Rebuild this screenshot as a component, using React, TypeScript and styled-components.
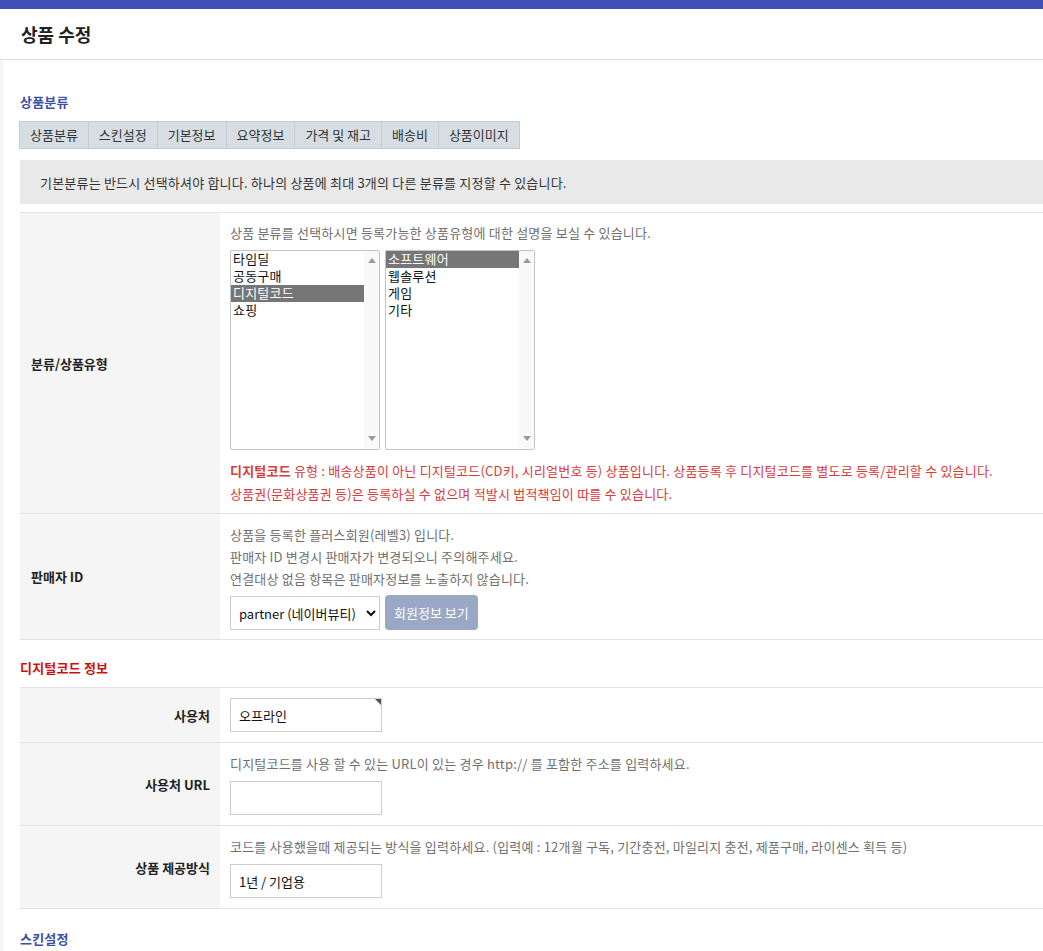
import styled, { createGlobalStyle } from "styled-components";

const GlobalStyle = createGlobalStyle`
  html, body {
    margin: 0;
    padding: 0;
    background: #ffffff;
  }
  body {
    font-family: "Noto Sans CJK KR", "Noto Sans", sans-serif;
    font-size: 13px;
    color: #333;
    letter-spacing: 0.2px;
  }
  * { box-sizing: border-box; }
`;

const TopBar = styled.div`
  height: 9px;
  background: #3f51b5;
`;

const Header = styled.header`
  height: 51px;
  display: flex;
  align-items: center;
  padding-left: 21px;
  border-bottom: 1px solid #dddddd;
  h1 {
    margin: 0;
    font-size: 18px;
    font-weight: 700;
    color: #222;
    letter-spacing: 0;
  }
`;

const Content = styled.main`
  padding-left: 20px;
  border-left: 3px solid #f5f5f5;
`;

const SectionTitle = styled.h2<{ $tone?: "blue" | "red"; $top: number }>`
  margin: 0 0 0 -3px;
  font-size: 13px;
  font-weight: 700;
  line-height: 18px;
  color: ${(p) => (p.$tone === "red" ? "#cc1111" : "#3d4fa8")};
  padding-top: ${(p) => p.$top}px;
  padding-bottom: 10px;
`;

const Tabs = styled.ul`
  display: inline-flex;
  margin: 0 0 0 -4px;
  padding: 0;
  list-style: none;
  border: 1px solid #c5cdd2;
  background: #d6dee3;
`;

const Tab = styled.li`
  height: 26px;
  line-height: 26px;
  padding: 0 10px;
  color: #333;
  letter-spacing: 0;
  border-left: 1px solid #c5cdd2;
  &:first-child { border-left: none; }
`;

const Notice = styled.div`
  margin: 11px 0 0 -3px;
  height: 44px;
  display: flex;
  align-items: center;
  padding-left: 20px;
  background: #e9e9e9;
  color: #333;
`;

const Table = styled.div<{ $gap: number }>`
  margin: ${(p) => p.$gap}px 0 0 -3px;
  border-top: 1px solid #e2e2e2;
`;

const Row = styled.div`
  display: grid;
  grid-template-columns: 200px 1fr;
  border-bottom: 1px solid #e2e2e2;
`;

const Label = styled.div<{ $align?: "left" | "right" }>`
  background: #f5f5f5;
  display: flex;
  align-items: center;
  justify-content: ${(p) => (p.$align === "right" ? "flex-end" : "flex-start")};
  padding: 0 10px 0 11px;
  font-weight: 700;
  color: #222;
  letter-spacing: 0;
`;

const Cell = styled.div<{ $pt?: number; $pb?: number }>`
  padding: ${(p) => p.$pt ?? 10}px 10px ${(p) => p.$pb ?? 10}px 10px;
  display: flex;
  flex-direction: column;
  align-items: flex-start;
`;

const Help = styled.p<{ $lh?: number }>`
  margin: 0;
  color: #707070;
  line-height: ${(p) => p.$lh ?? 20}px;
`;

const ListRow = styled.div`
  display: flex;
  gap: 5px;
  margin-top: 7px;
  margin-bottom: 9px;
`;

const ListBox = styled.div`
  width: 150px;
  height: 200px;
  border: 1px solid #c4c4c4;
  border-radius: 2px;
  display: flex;
  background: #fff;
`;

const Options = styled.ul`
  flex: 1;
  margin: 0;
  padding: 0;
  list-style: none;
`;

const Option = styled.li<{ $selected?: boolean }>`
  height: 17px;
  line-height: 16px;
  padding-left: 2px;
  color: ${(p) => (p.$selected ? "#ffffff" : "#111")};
  background: ${(p) => (p.$selected ? "#767676" : "transparent")};
`;

const ScrollTrack = styled.div`
  width: 15px;
  background: #f9f9f9;
  display: flex;
  flex-direction: column;
  justify-content: space-between;
  align-items: center;
  padding: 7px 0 8px;
`;

const Arrow = styled.span<{ $down?: boolean }>`
  width: 0;
  height: 0;
  border-left: 4px solid transparent;
  border-right: 4px solid transparent;
  ${(p) =>
    p.$down
      ? "border-top: 5px solid #9a9a9a;"
      : "border-bottom: 5px solid #9a9a9a;"}
`;

const Warn = styled.p`
  margin: 0;
  color: #d93a3a;
  line-height: 23px;
  b { font-weight: 700; }
`;

const Controls = styled.div`
  display: flex;
  gap: 5px;
  margin-top: 6px;
`;

const Select = styled.select`
  width: 150px;
  height: 34px;
  border: 1px solid #cccccc;
  background: #fff;
  font-family: "Noto Sans CJK KR", "Noto Sans", sans-serif;
  font-size: 13px;
  color: #111;
  padding: 0 4px;
  border-radius: 0;
`;

const GhostButton = styled.button`
  height: 35px;
  margin-top: -1px;
  padding: 0 9px;
  border: none;
  border-radius: 4px;
  background: #9aa8c6;
  color: #ffffff;
  font-family: "Noto Sans CJK KR", "Noto Sans", sans-serif;
  font-size: 13px;
  letter-spacing: 0;
`;

const InputWrap = styled.div<{ $mark?: boolean }>`
  position: relative;
  margin-top: ${(p) => (p.$mark ? 0 : 6)}px;
  &::after {
    content: "";
    display: ${(p) => (p.$mark ? "block" : "none")};
    position: absolute;
    top: 1px;
    right: 1px;
    width: 0;
    height: 0;
    border-top: 6px solid #555;
    border-left: 6px solid transparent;
  }
`;

const TextInput = styled.input`
  display: block;
  width: 152px;
  height: 34px;
  border: 1px solid #cccccc;
  padding: 0 8px;
  font-family: "Noto Sans CJK KR", "Noto Sans", sans-serif;
  font-size: 13px;
  color: #111;
  outline: none;
`;

const tabs = ["상품분류", "스킨설정", "기본정보", "요약정보", "가격 및 재고", "배송비", "상품이미지"];
const categories = ["타임딜", "공동구매", "디지털코드", "쇼핑"];
const types = ["소프트웨어", "웹솔루션", "게임", "기타"];

function List({ items, selected }: { items: string[]; selected: string }) {
  return (
    <ListBox>
      <Options>
        {items.map((it) => (
          <Option key={it} $selected={it === selected}>
            {it}
          </Option>
        ))}
      </Options>
      <ScrollTrack>
        <Arrow />
        <Arrow $down />
      </ScrollTrack>
    </ListBox>
  );
}

export default function App() {
  return (
    <>
      <GlobalStyle />
      <TopBar />
      <Header>
        <h1>상품 수정</h1>
      </Header>
      <Content>
        <SectionTitle $top={33}>상품분류</SectionTitle>
        <Tabs>
          {tabs.map((t) => (
            <Tab key={t}>{t}</Tab>
          ))}
        </Tabs>
        <Notice>
          기본분류는 반드시 선택하셔야 합니다. 하나의 상품에 최대 3개의 다른 분류를 지정할 수 있습니다.
        </Notice>

        <Table $gap={8}>
          <Row>
            <Label>분류/상품유형</Label>
            <Cell $pt={10} $pb={8}>
              <Help>상품 분류를 선택하시면 등록가능한 상품유형에 대한 설명을 보실 수 있습니다.</Help>
              <ListRow>
                <List items={categories} selected="디지털코드" />
                <List items={types} selected="소프트웨어" />
              </ListRow>
              <Warn>
                <b>디지털코드</b> 유형 : 배송상품이 아닌 디지털코드(CD키, 시리얼번호 등) 상품입니다. 상품등록 후 디지털코드를 별도로 등록/관리할 수 있습니다.
              </Warn>
              <Warn>상품권(문화상품권 등)은 등록하실 수 없으며 적발시 법적책임이 따를 수 있습니다.</Warn>
            </Cell>
          </Row>
          <Row>
            <Label>판매자 ID</Label>
            <Cell $pt={10} $pb={9}>
              <Help $lh={22}>상품을 등록한 플러스회원(레벨3) 입니다.</Help>
              <Help $lh={22}>판매자 ID 변경시 판매자가 변경되오니 주의해주세요.</Help>
              <Help $lh={22}>연결대상 없음 항목은 판매자정보를 노출하지 않습니다.</Help>
              <Controls>
                <Select defaultValue="partner">
                  <option value="partner">partner (네이버뷰티)</option>
                </Select>
                <GhostButton type="button">회원정보 보기</GhostButton>
              </Controls>
            </Cell>
          </Row>
        </Table>

        <SectionTitle $tone="red" $top={19}>디지털코드 정보</SectionTitle>
        <Table $gap={0}>
          <Row>
            <Label $align="right">사용처</Label>
            <Cell>
              <InputWrap $mark>
                <TextInput defaultValue="오프라인" />
              </InputWrap>
            </Cell>
          </Row>
          <Row>
            <Label $align="right">사용처 URL</Label>
            <Cell>
              <Help $lh={22}>디지털코드를 사용 할 수 있는 URL이 있는 경우 http:// 를 포함한 주소를 입력하세요.</Help>
              <InputWrap>
                <TextInput defaultValue="" />
              </InputWrap>
            </Cell>
          </Row>
          <Row>
            <Label $align="right">상품 제공방식</Label>
            <Cell>
              <Help $lh={22}>코드를 사용했을때 제공되는 방식을 입력하세요. (입력예 : 12개월 구독, 기간충전, 마일리지 충전, 제품구매, 라이센스 획득 등)</Help>
              <InputWrap>
                <TextInput defaultValue="1년 / 기업용" />
              </InputWrap>
            </Cell>
          </Row>
        </Table>

        <SectionTitle $top={21}>스킨설정</SectionTitle>
      </Content>
    </>
  );
}
